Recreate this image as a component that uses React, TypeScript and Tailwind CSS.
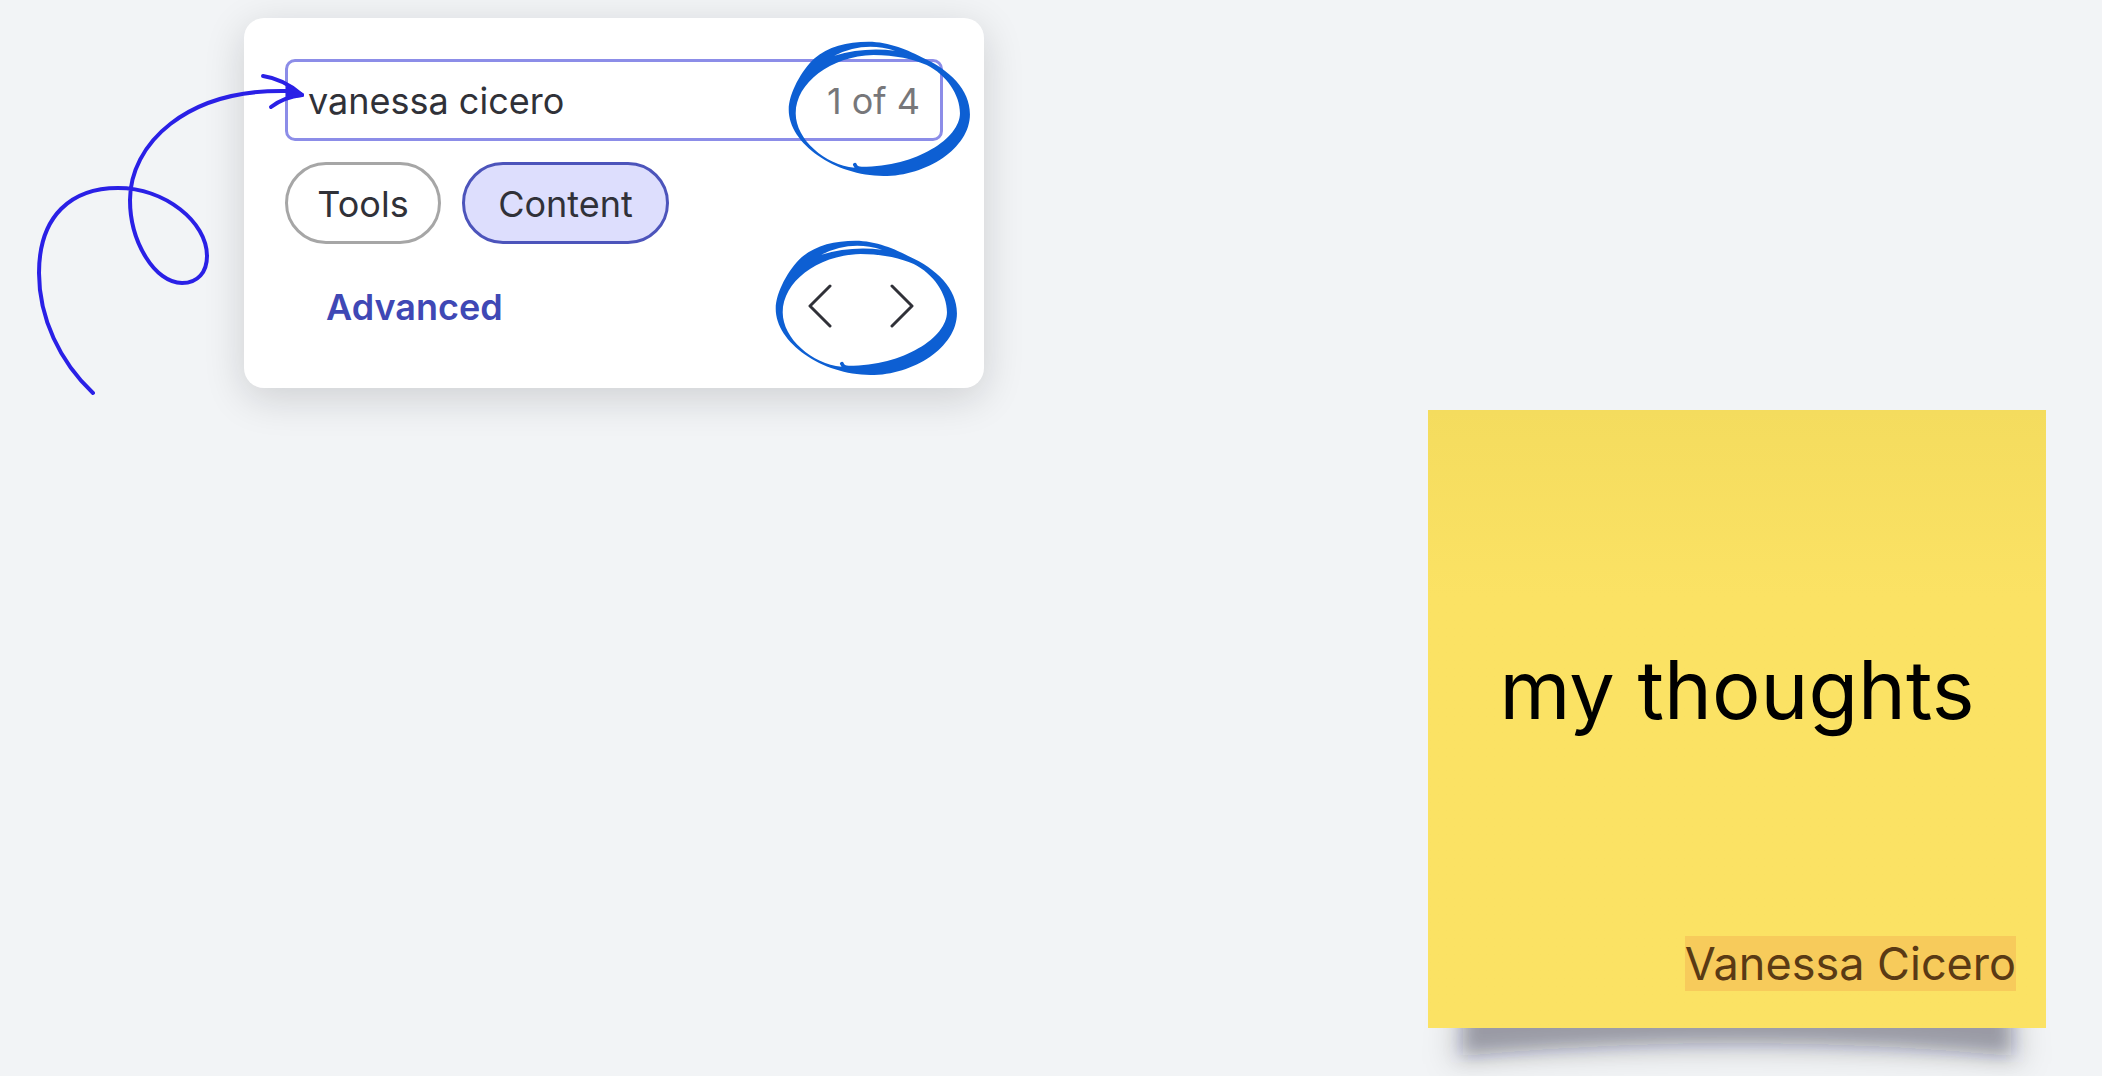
import { useState } from 'react';

const MATCHES = 4;

function Scribble({ className }: { className: string }) {
  return (
    <svg
      className={`absolute h-[137px] w-[185px] pointer-events-none ${className}`}
      viewBox="140 60 556 412"
      fill="#0d5fd3"
      fillRule="evenodd"
      aria-hidden="true"
    >
      <path
        d="M385 65C445 65 510 92 545 112C630 150 690 210 690 283C690 385 560 469 430 469C285 469 145 372 145 270C145 220 185 150 222 116C262 80 320 65 385 65Z
        M400 105C465 105 520 118 560 135C620 165 660 225 660 280C660 355 530 441 365 441C355 441 350 438 349 432A6 6 0 0 0 338 436L343 444C255 435 166 360 166 280C166 190 270 108 400 105Z
        M282 107Q370 62 465 92Q370 80 282 107Z"
      />
    </svg>
  );
}

function LoopArrow() {
  return (
    <svg
      className="absolute left-0 top-0 h-[420px] w-[320px] pointer-events-none"
      viewBox="0 0 320 420"
      fill="none"
      stroke="#2a20e6"
      strokeWidth="4"
      strokeLinecap="round"
      strokeLinejoin="round"
      aria-hidden="true"
    >
      <path d="M93 393C60 362 39 318 39 273C39 215 72 188 118 188C165 188 207 222 207 256C207 272 198 283 182 283C155 283 130 242 130 200C130 145 185 88 290 91L302 95" />
      <path d="M263 76Q284 79 302 95Q284 97 271 107" />
      <path d="M288 87L302 95L288 96Z" fill="#2a20e6" />
    </svg>
  );
}

function Chevron({ d }: { d: string }) {
  return (
    <svg
      className="h-11 w-6"
      viewBox="0 0 24 44"
      fill="none"
      stroke="#303138"
      strokeWidth="3"
      strokeLinecap="round"
      strokeLinejoin="round"
      aria-hidden="true"
    >
      <path d={d} />
    </svg>
  );
}

function SearchPanel() {
  const [query, setQuery] = useState('vanessa cicero');
  const [tab, setTab] = useState('Content');
  const [current, setCurrent] = useState(1);

  const selected = 'border-[#4c54bb] bg-[#dddefd]';
  const unselected = 'border-[#a6a6a6] bg-white';

  return (
    <section className="relative ml-[244px] mt-[18px] w-[740px] shrink-0 self-start rounded-[20px] bg-white p-[41px] text-4xl text-[#303138] shadow-[0_10px_40px_rgba(20,20,24,0.16)]">
      <div className="flex h-[82px] items-center rounded-[10px] border-3 border-[#8c8de8] px-5 pt-0.5">
        <input
          aria-label="Search the board"
          className="min-w-0 flex-1 bg-transparent outline-none"
          value={query}
          onChange={(e) => setQuery(e.target.value)}
        />
        <span className="text-[#77777a]">
          {current} of {MATCHES}
        </span>
      </div>

      <div className="mt-[21px] flex gap-[21px]">
        <button
          className={`h-[82px] w-[156px] rounded-full border-3 pt-0.5 ${tab === 'Tools' ? selected : unselected}`}
          onClick={() => setTab('Tools')}
        >
          Tools
        </button>
        <button
          className={`h-[82px] w-[207px] rounded-full border-3 pt-0.5 ${tab === 'Content' ? selected : unselected}`}
          onClick={() => setTab('Content')}
        >
          Content
        </button>
      </div>

      <div className="mt-[21px] flex items-center justify-between">
        <button className="h-[82px] px-[41px] pt-0.5 font-semibold text-[#3f48b5]">Advanced</button>
        <div className="flex">
          <button
            aria-label="Previous result"
            className="flex h-[82px] w-[82px] items-center justify-center"
            onClick={() => setCurrent(Math.max(1, current - 1))}
          >
            <Chevron d="M22 2L2 22L22 42" />
          </button>
          <button
            aria-label="Next result"
            className="flex h-[82px] w-[82px] items-center justify-center"
            onClick={() => setCurrent(Math.min(MATCHES, current + 1))}
          >
            <Chevron d="M2 2L22 22L2 42" />
          </button>
        </div>
      </div>

      <Scribble className="right-3 top-[22px]" />
      <Scribble className="right-[25px] top-[221px]" />
    </section>
  );
}

function StickyNote() {
  return (
    <article className="relative mb-12 mr-14 h-[618px] w-[618px] shrink-0 self-end">
      {/* Lifted-corner shadow */}
      <svg
        className="absolute inset-x-0 top-[558px] h-[108px] w-full overflow-visible"
        viewBox="0 0 618 108"
        aria-hidden="true"
      >
        <defs>
          <filter id="lift" x="-10%" y="-50%" width="120%" height="200%">
            <feGaussianBlur stdDeviation="9" />
          </filter>
          <filter id="haze" x="-20%" y="-50%" width="140%" height="200%">
            <feGaussianBlur stdDeviation="14" />
          </filter>
        </defs>
        <path
          d="M26 30H592L598 96Q309 76 20 96Z"
          fill="#202226"
          fillOpacity="0.12"
          filter="url(#haze)"
        />
        <path
          d="M38 0H580L584 88Q309 62 34 88Z"
          fill="#202226"
          fillOpacity="0.32"
          filter="url(#lift)"
        />
      </svg>
      <div className="relative flex h-full flex-col bg-linear-to-b from-[#f4dc5e] to-[#fbe264] to-30%">
        <p className="absolute inset-x-0 top-[230px] text-center text-[81px] leading-[100px] text-black">
          my thoughts
        </p>
        <p className="mt-auto mb-[37px] mr-[30px] text-right text-[45px] leading-[54px]">
          <mark className="bg-[#f7cb5b] text-[#5a3a14]">Vanessa Cicero</mark>
        </p>
      </div>
    </article>
  );
}

export default function App() {
  return (
    <main className="relative flex min-h-screen justify-between overflow-hidden bg-[#f2f4f6] font-['Inter',sans-serif]">
      <SearchPanel />
      <StickyNote />
      <LoopArrow />
    </main>
  );
}
